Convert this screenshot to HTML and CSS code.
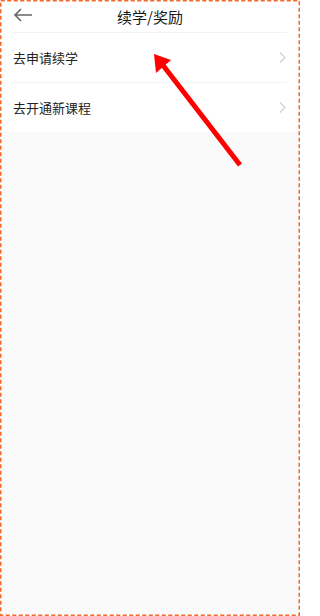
FILE: index.html
```html
<!DOCTYPE html>
<html lang="zh">
<head>
<meta charset="utf-8">
<title>续学/奖励</title>
<link rel="stylesheet" href="styles.css">
</head>
<body>
<div class="page">
  <header class="topbar">
    <svg class="back" width="20" height="14" viewBox="0 0 20 14">
      <path d="M19 7H2M8 1L2 7l6 6" fill="none" stroke="#666" stroke-width="1.6"/>
    </svg>
    <div class="title">续学/奖励</div>
  </header>
  <div class="list">
    <div class="row">
      <span class="label">去申请续学</span>
      <svg class="chev" width="7" height="11" viewBox="0 0 7 11"><path d="M1 0.5l5 5-5 5" fill="none" stroke="#cfcfcf" stroke-width="1.1"/></svg>
    </div>
    <div class="row">
      <span class="label">去开通新课程</span>
      <svg class="chev" width="7" height="11" viewBox="0 0 7 11"><path d="M1 0.5l5 5-5 5" fill="none" stroke="#cfcfcf" stroke-width="1.1"/></svg>
    </div>
  </div>
  <svg class="overlay" width="300" height="616" viewBox="0 0 300 616">
    <rect x="0.75" y="0.75" width="298.5" height="614.5" fill="none" stroke="#f26a2a" stroke-width="1.5" stroke-dasharray="4 2.5"/>
    <line x1="240" y1="165" x2="162" y2="64" stroke="#ff0000" stroke-width="5"/>
    <polygon points="154,54 171,60 156,73" fill="#ff0000"/>
  </svg>
</div>
</body>
</html>
```
FILE: styles.css
```css
html, body {
  margin: 0;
  padding: 0;
}
body {
  font-family: "Noto Sans CJK SC", "Noto Sans", sans-serif;
  color: #222;
}
.page {
  position: relative;
  width: 300px;
  height: 616px;
  box-sizing: border-box;
  padding: 1px;
  background: #fafafa;
  overflow: hidden;
}
.topbar {
  position: relative;
  height: 31px;
  background: #fff;
  display: flex;
  align-items: center;
  justify-content: center;
}
.back {
  position: absolute;
  left: 12px;
  top: 7px;
}
.title {
  font-size: 15px;
  line-height: 20px;
  font-weight: 400;
  color: #1a1a1a;
}
.list {
  background: #fff;
}
.row {
  height: 50px;
  margin: 0 12px;
  display: flex;
  align-items: center;
  justify-content: space-between;
  border-top: 1px solid #f2f2f2;
  box-sizing: border-box;
}
.label {
  font-size: 13px;
  color: #222;
}
.chev {
  margin-right: 1px;
}
.overlay {
  position: absolute;
  left: 0;
  top: 0;
  pointer-events: none;
}
```
